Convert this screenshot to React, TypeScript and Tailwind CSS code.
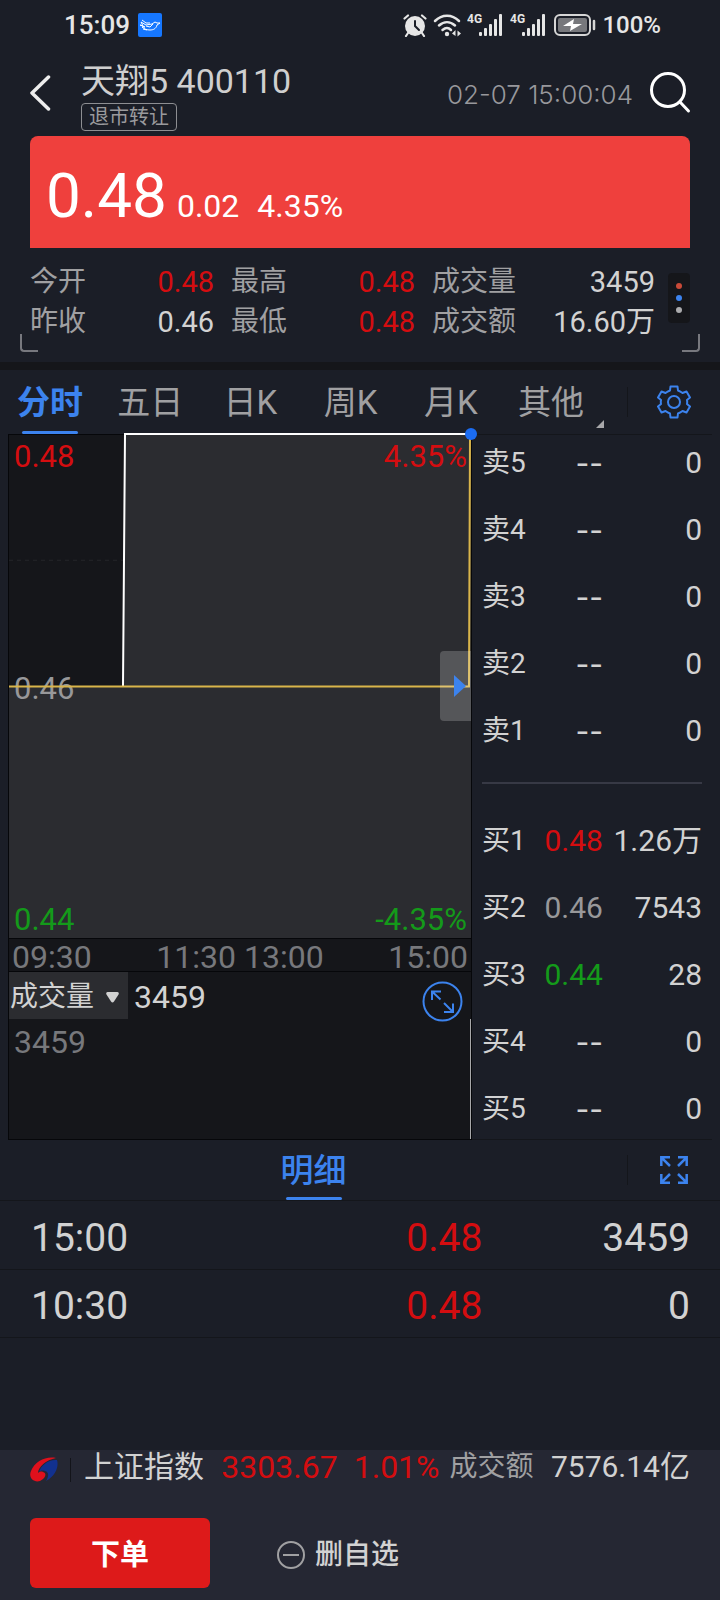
import React from 'react';
import clsx from 'clsx';

const tabs = ['分时', '五日', '日K', '周K', '月K', '其他'];

const stats = [
  { label: '今开', value: '0.48', up: true },
  { label: '最高', value: '0.48', up: true },
  { label: '成交量', value: '3459', up: false },
  { label: '昨收', value: '0.46', up: false },
  { label: '最低', value: '0.48', up: true },
  { label: '成交额', value: '16.60万', up: false },
];

type Quote = { name: string; price: string; volume: string; tone?: string };

const asks: Quote[] = [
  { name: '卖5', price: '--', volume: '0' },
  { name: '卖4', price: '--', volume: '0' },
  { name: '卖3', price: '--', volume: '0' },
  { name: '卖2', price: '--', volume: '0' },
  { name: '卖1', price: '--', volume: '0' },
];

const bids: Quote[] = [
  { name: '买1', price: '0.48', volume: '1.26万', tone: 'text-[#d40d10]' },
  { name: '买2', price: '0.46', volume: '7543', tone: 'text-[#98989a]' },
  { name: '买3', price: '0.44', volume: '28', tone: 'text-[#149a1a]' },
  { name: '买4', price: '--', volume: '0' },
  { name: '买5', price: '--', volume: '0' },
];

const trades = [
  { time: '15:00', price: '0.48', volume: '3459' },
  { time: '10:30', price: '0.48', volume: '0' },
];

const Signal = () => (
  <svg className="h-[24px] w-[36px]" viewBox="0 0 36 24" fill="#e6e6e6">
    <text x="0" y="10" fontSize="12" fontWeight="700" fontFamily="Roboto, sans-serif">4G</text>
    <rect x="12" y="19" width="3" height="4" rx="1" />
    <rect x="17" y="15" width="3" height="8" rx="1" />
    <rect x="22" y="11" width="3" height="12" rx="1" />
    <rect x="27" y="6" width="3" height="17" rx="1" />
    <rect x="32" y="1" width="3" height="22" rx="1" />
  </svg>
);

const StatusBar = () => (
  <div className="flex h-[50px] items-center justify-between pr-[59px] pl-[64px] text-[26px] leading-[30px] font-medium text-[#e6e6e6]">
    <div className="flex items-center gap-2">
      <span>15:09</span>
      <svg className="size-6" viewBox="0 0 24 24" fill="none" stroke="#fff" strokeWidth="1">
        <rect width="24" height="24" rx="2" fill="#1677ff" stroke="none" />
        <path d="M2 12l3 1-2-4 5 3 6-1 3-2 2 1h3l-3 2c-1 4-4 5-7 5-3 0-6-1-8-3l3 0zM4 7l4 3 4 0M8 13l4 1 3-3M5 16l4 1" />
      </svg>
    </div>
    <div className="flex items-center">
      <svg className="mr-[6px] size-6" viewBox="0 0 24 24" fill="none">
        <circle cx="12" cy="13" r="10" fill="#e6e6e6" />
        <path d="M1.500 5.500L5 2.500M22.500 5.500L19 2.500M5 20l-2 3M19 20l2 3" stroke="#e6e6e6" strokeWidth="2.200" strokeLinecap="round" />
        <path d="M12 8v5l4 4" stroke="#1b1e27" strokeWidth="2" strokeLinecap="round" />
      </svg>
      <svg className="mr-[6px] h-6 w-[28px]" viewBox="0 0 28 24" fill="none" stroke="#e6e6e6" strokeWidth="2.500" strokeLinecap="round">
        <path d="M2 8C9 1 19 1 26 8M6 12.500c5-4.500 11-4.500 16 0M9.500 17c3-2.500 6-2.500 8.500 0" />
        <circle cx="14" cy="21" r="2.200" fill="#e6e6e6" stroke="none" />
        <path d="M19 20.500l3.500-3.500v6zM28 20.500l-3.500-3v6z" fill="#e6e6e6" stroke="none" />
      </svg>
      <span className="mr-[7px] flex"><Signal /></span>
      <span className="mr-[8px] flex"><Signal /></span>
      <svg className="mr-[6px] h-6 w-[42px]" viewBox="0 0 42 24" fill="none">
        <rect x="1" y="2" width="35" height="20" rx="5" stroke="#d6d6d6" strokeWidth="2" />
        <rect x="4" y="5" width="29" height="14" rx="2" fill="#77787c" />
        <path d="M20 6L9 13h8l-1 5 12-7h-9z" fill="#fff" />
        <path d="M40 8v8" stroke="#d6d6d6" strokeWidth="2.500" strokeLinecap="round" />
      </svg>
      <span className="text-[24px]">100%</span>
    </div>
  </div>
);

const Header = () => (
  <header className="flex h-[86px] items-center pr-[29px] pl-[30px]">
    <button type="button" aria-label="返回" className="mr-[30px]">
      <svg className="h-[36px] w-[21px]" viewBox="0 0 21 36" fill="none" stroke="#ededed" strokeWidth="3.500" strokeLinecap="round" strokeLinejoin="round">
        <path d="M18.500 2L2 18l16.500 16" />
      </svg>
    </button>
    <div className="flex-1 pt-[3px]">
      <h1 className="text-[34px] leading-[44px] text-[#cfcfcf]">天翔5 400110</h1>
      <span className="inline-flex h-[28px] items-center rounded border border-[#8d8e92] px-[7px] text-[20px] leading-[24px] text-[#9a9a9d]">
        退市转让
      </span>
    </div>
    <time className="mr-[16px] pt-[3px] font-['Inter'] text-[26px] leading-[30px] font-light text-[#98989c]">02-07 15:00:04</time>
    <button type="button" aria-label="搜索">
      <svg className="size-[42px]" viewBox="0 0 42 42" fill="none" stroke="#fff" strokeWidth="3" strokeLinecap="round">
        <circle cx="19" cy="18" r="16.500" />
        <path d="M31 30l8.500 9" />
      </svg>
    </button>
  </header>
);

const Summary = () => (
  <section className="relative px-[30px] pb-[20px]">
    <div className="flex h-[112px] items-baseline rounded-t-lg bg-[#ef403d] pt-[24px] pl-[16px] text-[32px] leading-[72px] text-white">
      <span className="mr-[10px] text-[62px]">0.48</span>
      <span className="mr-[18px]">0.02</span>
      <span>4.35%</span>
    </div>
    <div className="mt-[14px] flex items-start gap-[13px]">
      <dl className="grid flex-1 grid-cols-[184fr_184fr_223fr] gap-x-[17px]">
        {stats.map((item) => (
          <div key={item.label} className="flex h-10 items-center justify-between">
            <dt className="text-[28px] leading-10 text-[#a0a0a2]">{item.label}</dt>
            <dd className={clsx('text-[29px] leading-10', item.up ? 'text-[#d40d10]' : 'text-[#d2d2d2]')}>{item.value}</dd>
          </div>
        ))}
      </dl>
      <button type="button" aria-label="更多指标" className="mt-[11px] flex h-[50px] w-[22px] flex-col items-center justify-center gap-[6px] rounded bg-[#15161a]">
        <i className="size-[6px] rounded-full bg-[#c94a38]" />
        <i className="size-[6px] rounded-full bg-[#3c83ee]" />
        <i className="size-[6px] rounded-full bg-[#ababad]" />
      </button>
    </div>
    <i className="absolute bottom-[10px] left-[20px] h-[18px] w-[18px] rounded-bl border-b-2 border-l-2 border-[#77787e]" />
    <i className="absolute right-[20px] bottom-[10px] h-[18px] w-[18px] rounded-br border-r-2 border-b-2 border-[#77787e]" />
  </section>
);

const PeriodTabs = () => (
  <nav className="flex h-[64px] items-center">
    <div className="mr-[26px] flex h-full flex-1">
      {tabs.map((tab, i) => (
        <button
          key={tab}
          type="button"
          className={clsx(
            'relative h-full flex-1 pt-[2px] text-[33px] leading-[40px]',
            i === 0 ? 'font-bold text-[#3c83ee]' : 'text-[#a0a0a2]'
          )}
        >
          {tab}
          {i === 0 && <i className="absolute bottom-0 left-1/2 h-[3px] w-[56px] -translate-x-1/2 rounded-full bg-[#3c83ee]" />}
          {i === tabs.length - 1 && (
            <svg className="absolute -right-[3px] bottom-[6px] size-2" viewBox="0 0 8 8" fill="#a8a8aa">
              <path d="M8 0v8H0z" />
            </svg>
          )}
        </button>
      ))}
    </div>
    <div className="flex h-[30px] w-[93px] items-center justify-center border-l border-[#14161b]">
      <button type="button" aria-label="设置">
        <svg className="size-[34px]" viewBox="0 0 34 34" fill="none" stroke="#3c83ee" strokeWidth="2" strokeLinejoin="round">
          <path d="M13.500 1.500h7l.5 4q2.500 1 4.500 2.500L29.500 6.500l3.500 6-3 2.500q.4 2 0 4l3 2.500-3.500 6-4-1.500q-2 1.500-4.500 2.500l-.5 4h-7l-.5-4q-2.500-1-4.500-2.500l-4 1.500-3.500-6 3-2.500q-.4-2 0-4l-3-2.500 3.500-6 4 1.500q2-1.500 4.500-2.500z" />
          <circle cx="17" cy="17" r="6" />
        </svg>
      </button>
    </div>
  </nav>
);

const PriceChart = () => (
  <div className="relative h-[505px] border border-[#06070a] bg-[#15161a] text-[31px] leading-[40px]">
    <svg className="h-full w-full" viewBox="0 0 462 504" preserveAspectRatio="none" fill="none">
      <path d="M0 125.500H115" stroke="#25262a" strokeDasharray="4 4" />
      <path d="M0 252H114L116 0H462V504H0z" fill="#2b2c30" />
    </svg>
    <span className="absolute top-[2px] left-[5px] text-[#d40d10]">0.48</span>
    <span className="absolute top-[2px] right-[4px] text-[#d40d10]">4.35%</span>
    <span className="absolute top-[234px] left-[5px] text-[#98989a]">0.46</span>
    <span className="absolute bottom-[2px] left-[5px] leading-[32px] text-[#149a1a]">0.44</span>
    <span className="absolute right-[4px] bottom-[2px] leading-[32px] text-[#149a1a]">-4.35%</span>
    <svg className="absolute inset-0 h-full w-full overflow-visible" viewBox="0 0 462 504" preserveAspectRatio="none" fill="none" strokeWidth="2">
      <path d="M114 252L116 -1H461" stroke="#fff" />
      <path d="M0 252H460L461 0" stroke="#d9b54a" />
      <circle cx="462" cy="-1" r="6" fill="#1b6cf2" />
    </svg>
    <button type="button" aria-label="收起盘口" className="absolute top-[216px] right-0 flex h-[70px] w-[31px] items-center justify-end rounded-l bg-white/20 pr-[5px]">
      <svg className="h-[22px] w-[12px]" viewBox="0 0 12 22" fill="#3c83ee">
        <path d="M0 0l12 11L0 22z" />
      </svg>
    </button>
  </div>
);

const VolumeChart = () => (
  <div className="h-[168px] border border-t-0 border-[#06070a] bg-[#15161a]">
    <div className="flex h-[47px]">
      <button type="button" className="flex w-[119px] items-center gap-[12px] bg-[#2b2c30] pt-[3px] pl-px text-[28px] leading-[40px] text-[#d2d2d2]">
        成交量
        <svg className="h-[11px] w-[13px] shrink-0" viewBox="0 0 13 11" fill="#d2d2d2">
          <path d="M1.500 0h10q2 .5 1 2.500L8 9.500q-1.500 2-3 0L.5 2.500Q-.5.5 1.500 0z" />
        </svg>
      </button>
      <span className="ml-[6px] flex-1 text-[32px] leading-[50px] text-[#d2d2d2]">3459</span>
      <button type="button" aria-label="放大" className="mt-[9px] mr-[8px] size-[41px]">
        <svg className="size-[41px]" viewBox="0 0 41 41" fill="none" stroke="#3c83ee" strokeWidth="2">
          <circle cx="20.500" cy="20.500" r="19" />
          <path d="M18.500 18.500L10 10.500M10 19v-8.500h9M22 22l9 9M31 22.500V31h-9" />
        </svg>
      </button>
    </div>
    <div className="h-[120px] border-r border-[#a8a8aa] pl-[5px] text-[32px] leading-[46px] text-[#77787c]">3459</div>
  </div>
);

const QuoteTable = ({ label, rows }: { label: string; rows: Quote[] }) => (
  <table aria-label={label} className="w-full table-fixed text-[30px] leading-10 text-[#d2d2d2]">
    <tbody>
      {rows.map((row) => (
        <tr key={row.name} className="h-[67px] align-top last:h-10">
          <th scope="row" className="w-[23%] text-left text-[28px] font-normal">{row.name}</th>
          <td className={clsx("w-[32%] text-right", row.price === '--' && "font-['Inter']", row.tone)}>{row.price}</td>
          <td className="text-right whitespace-nowrap">{row.volume}</td>
        </tr>
      ))}
    </tbody>
  </table>
);

const Market = () => (
  <section className="flex pr-[8px] pl-[8px]">
    <div className="min-w-0 flex-1">
      <PriceChart />
      <div className="flex h-[33px] items-center border border-t-0 border-[#06070a] bg-[#15161a] px-[3px] pt-[3px] text-[32px] leading-[30px] text-[#77787c]">
        <span>09:30</span>
        <span className="mx-auto flex gap-[8px]">
          <span>11:30</span>
          <span>13:00</span>
        </span>
        <span>15:00</span>
      </div>
      <VolumeChart />
    </div>
    <div className="w-[240px] border-y border-[#14161b] pt-[8px] pr-[10px] pl-[10px]">
      <QuoteTable label="卖盘" rows={asks} />
      <hr className="mt-[31px] mb-[37px] border-t-2 border-[#373945]" />
      <QuoteTable label="买盘" rows={bids} />
    </div>
  </section>
);

const Details = () => (
  <section>
    <div className="flex h-[61px] items-center border-b border-[#14161b]">
      <div className="flex h-full flex-1 justify-center">
        <button type="button" className="relative h-full pt-[2px] text-[33px] leading-[40px] font-medium text-[#3c83ee]">
          明细
          <i className="absolute bottom-0 left-1/2 h-[3px] w-[56px] -translate-x-1/2 rounded-full bg-[#3c83ee]" />
        </button>
      </div>
      <div className="flex h-[30px] w-[93px] items-center justify-center border-l border-[#14161b]">
        <button type="button" aria-label="全屏">
          <svg className="size-[28px]" viewBox="0 0 28 28" fill="none" stroke="#3c83ee" strokeWidth="2.500">
            <path d="M1.300 10V1.300H10M1.300 1.300L10 10M18 1.300h8.700V10M26.700 1.300L18 10M1.300 18v8.700H10M1.300 26.700L10 18M26.700 18v8.700H18M26.700 26.700L18 18" />
          </svg>
        </button>
      </div>
    </div>
    <table aria-label="成交明细" className="w-full table-fixed text-[39px] leading-[60px] text-[#d2d2d2]">
      <tbody>
        {trades.map((trade) => (
          <tr key={trade.time} className="h-[68px] border-b border-[#14161b]">
            <td className="w-[33%] pt-[6px] pl-[31px]">{trade.time}</td>
            <td className="w-[34%] pt-[6px] text-right text-[#d40d10]">{trade.price}</td>
            <td className="pt-[6px] pr-[30px] text-right">{trade.volume}</td>
          </tr>
        ))}
      </tbody>
    </table>
  </section>
);

const BottomBar = () => (
  <footer className="mt-auto bg-[#252733] pb-[12px]">
    <div className="flex h-[34px] items-center pr-[30px] pl-[30px] text-[30px] leading-[34px] whitespace-nowrap text-[#d2d2d2]">
      <svg className="mt-[6px] h-[26px] w-[28px]" viewBox="0 0 28 26" fill="none">
        <path d="M26 1C16-1 5 4 1 14c-3 7 3 12 9 10 6-3 7-8 3-9-2-1-4 0-5 1 0-6 8-13 18-15z" fill="#e0101c" />
        <path d="M27 3c2 6-1 16-11 21 3-5 3-9-1-10-3-1-5 0-6 1C11 8 19 2 27 3z" fill="#12318f" />
      </svg>
      <i className="mt-[6px] mr-[13px] ml-[12px] h-[24px] w-px bg-[#13141a]" />
      <span>上证指数</span>
      <span className="ml-auto text-[32px] text-[#d40d10]">3303.67</span>
      <span className="ml-[16px] text-[32px] text-[#d40d10]">1.01%</span>
      <span className="ml-[10px] text-[28px] text-[#a0a0a2]">成交额</span>
      <span className="ml-auto">7576.14亿</span>
    </div>
    <div className="mt-[34px] flex items-center pl-[30px]">
      <button type="button" className="h-[70px] w-[180px] rounded-md bg-[#dd1a1a] pt-[3px] text-[29px] leading-[40px] font-bold text-white">下单</button>
      <button type="button" className="ml-[67px] flex items-center gap-[10px] pt-[3px] text-[28px] leading-[40px] font-medium text-[#d2d2d2]">
        <svg className="size-[28px]" viewBox="0 0 28 28" fill="none" stroke="#a0a0a2" strokeWidth="2">
          <circle cx="14" cy="14" r="13" />
          <path d="M6 14h16" />
        </svg>
        删自选
      </button>
    </div>
  </footer>
);

export default function App() {
  return (
    <main className="flex min-h-screen flex-col bg-[#1b1e27] font-['Roboto','Noto_Sans_CJK_SC',sans-serif]">
      <StatusBar />
      <Header />
      <Summary />
      <div className="h-[8px] bg-[#15161a]" />
      <PeriodTabs />
      <Market />
      <Details />
      <BottomBar />
    </main>
  );
}
